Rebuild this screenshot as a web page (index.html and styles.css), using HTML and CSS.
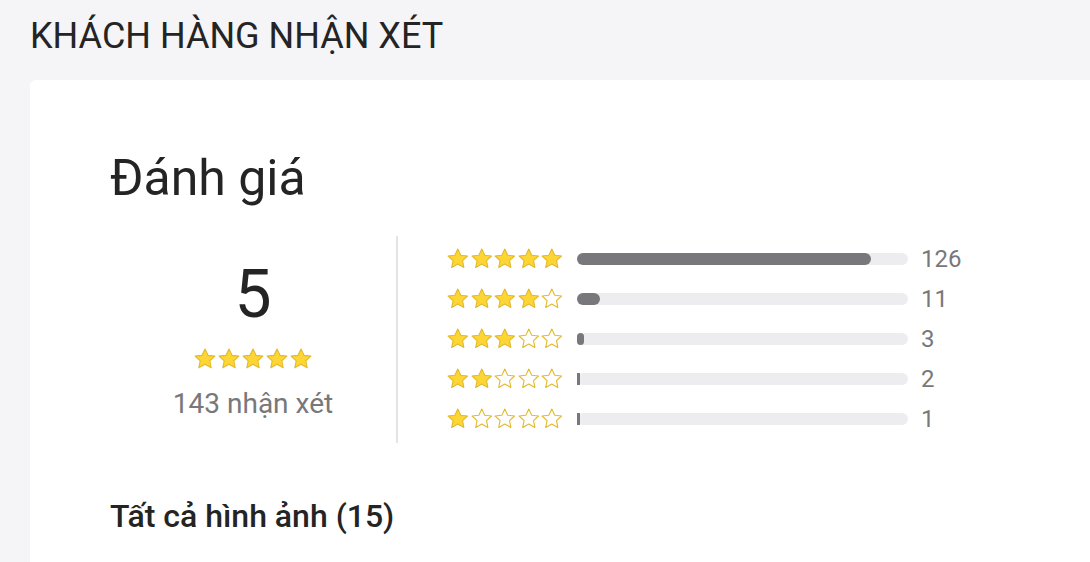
FILE: index.html
```html
<!DOCTYPE html>
<html lang="vi">
<head>
<meta charset="utf-8">
<link rel="stylesheet" href="styles.css">
<title>Khách hàng nhận xét</title>
</head>
<body>
<svg width="0" height="0" class="defs">
  <defs>
    <symbol id="star" viewBox="0 0 24 24">
      <path d="M12 2l3 6.35 6.9.8-5.1 4.75 1.38 6.9L12 17.35 5.82 20.8l1.38-6.9L2.1 9.15l6.9-.8z" stroke-linejoin="round"/>
    </symbol>
  </defs>
</svg>
<h2 class="section-title">KHÁCH HÀNG NHẬN XÉT</h2>
<div class="card">
  <h3 class="card-title">Đánh giá</h3>
  <div class="summary">
    <div class="overall">
      <div class="score">5</div>
      <div class="stars big">
        <svg class="star full"><use href="#star"/></svg><svg class="star full"><use href="#star"/></svg><svg class="star full"><use href="#star"/></svg><svg class="star full"><use href="#star"/></svg><svg class="star full"><use href="#star"/></svg>
      </div>
      <div class="total">143 nhận xét</div>
    </div>
    <div class="breakdown">
      <div class="row">
        <div class="stars"><svg class="star full"><use href="#star"/></svg><svg class="star full"><use href="#star"/></svg><svg class="star full"><use href="#star"/></svg><svg class="star full"><use href="#star"/></svg><svg class="star full"><use href="#star"/></svg></div>
        <div class="bar"><div class="fill" style="width:88.8%"></div></div>
        <span class="count">126</span>
      </div>
      <div class="row">
        <div class="stars"><svg class="star full"><use href="#star"/></svg><svg class="star full"><use href="#star"/></svg><svg class="star full"><use href="#star"/></svg><svg class="star full"><use href="#star"/></svg><svg class="star empty"><use href="#star"/></svg></div>
        <div class="bar"><div class="fill" style="width:7%"></div></div>
        <span class="count">11</span>
      </div>
      <div class="row">
        <div class="stars"><svg class="star full"><use href="#star"/></svg><svg class="star full"><use href="#star"/></svg><svg class="star full"><use href="#star"/></svg><svg class="star empty"><use href="#star"/></svg><svg class="star empty"><use href="#star"/></svg></div>
        <div class="bar"><div class="fill" style="width:2.1%"></div></div>
        <span class="count">3</span>
      </div>
      <div class="row">
        <div class="stars"><svg class="star full"><use href="#star"/></svg><svg class="star full"><use href="#star"/></svg><svg class="star empty"><use href="#star"/></svg><svg class="star empty"><use href="#star"/></svg><svg class="star empty"><use href="#star"/></svg></div>
        <div class="bar"><div class="fill thin"></div></div>
        <span class="count">2</span>
      </div>
      <div class="row">
        <div class="stars"><svg class="star full"><use href="#star"/></svg><svg class="star empty"><use href="#star"/></svg><svg class="star empty"><use href="#star"/></svg><svg class="star empty"><use href="#star"/></svg><svg class="star empty"><use href="#star"/></svg></div>
        <div class="bar"><div class="fill thin"></div></div>
        <span class="count">1</span>
      </div>
    </div>
  </div>
  <h4 class="images-title">Tất cả hình ảnh (15)</h4>
</div>
</body>
</html>
```
FILE: styles.css
```css
html, body {
  margin: 0;
  padding: 0;
}
body {
  background: #f5f4f6;
  font-family: Roboto, "Noto Sans", Arial, sans-serif;
  color: #242424;
  overflow: hidden;
}
.defs {
  position: absolute;
  width: 0;
  height: 0;
}
.section-title {
  margin: 0;
  padding: 14px 0 0 30px;
  height: 80px;
  box-sizing: border-box;
  font-size: 36px;
  font-weight: 400;
  line-height: 44px;
  color: #242424;
}
.card {
  margin-left: 30px;
  background: #fff;
  border-radius: 6px 0 0 0;
  padding: 66px 0 0 80px;
  min-height: 482px;
  box-sizing: border-box;
}
.card-title {
  margin: 0;
  font-size: 50px;
  font-weight: 400;
  line-height: 64px;
}
.summary {
  display: flex;
  margin-top: 26px;
}
.overall {
  width: 286px;
  display: flex;
  flex-direction: column;
  align-items: center;
  padding-top: 23px;
}
.score {
  font-size: 66px;
  line-height: 72px;
  color: #242424;
}
.stars {
  display: flex;
}
.star {
  width: 24px;
  height: 24px;
}
.star.full {
  fill: #fdd535;
  stroke: #e3b92c;
  stroke-width: 1.1;
}
.star.empty {
  fill: #fff;
  stroke: #e3b92c;
  stroke-width: 1.1;
}
.stars.big {
  margin-top: 16px;
}
.total {
  margin-top: 17px;
  font-size: 28px;
  line-height: 32px;
  color: #78787a;
}
.breakdown {
  border-left: 2px solid #e4e4e6;
  padding: 3px 0 4px 48px;
  display: flex;
  flex-direction: column;
}
.row {
  display: flex;
  align-items: center;
  height: 40px;
}
.row .stars .star {
  width: 23.6px;
  height: 23.6px;
}
.bar {
  width: 331px;
  height: 12px;
  border-radius: 6px;
  background: #ededf0;
  margin-left: 13px;
}
.fill {
  height: 100%;
  background: #78777c;
  border-radius: 6px;
  min-width: 7px;
}
.fill.thin {
  border-radius: 0;
  width: 3px;
  min-width: 3px;
}
.count {
  margin-left: 13px;
  font-size: 24px;
  color: #78787a;
}
.images-title {
  margin: 53px 0 0;
  font-size: 32px;
  font-weight: 500;
  line-height: 40px;
  color: #242424;
}
```
